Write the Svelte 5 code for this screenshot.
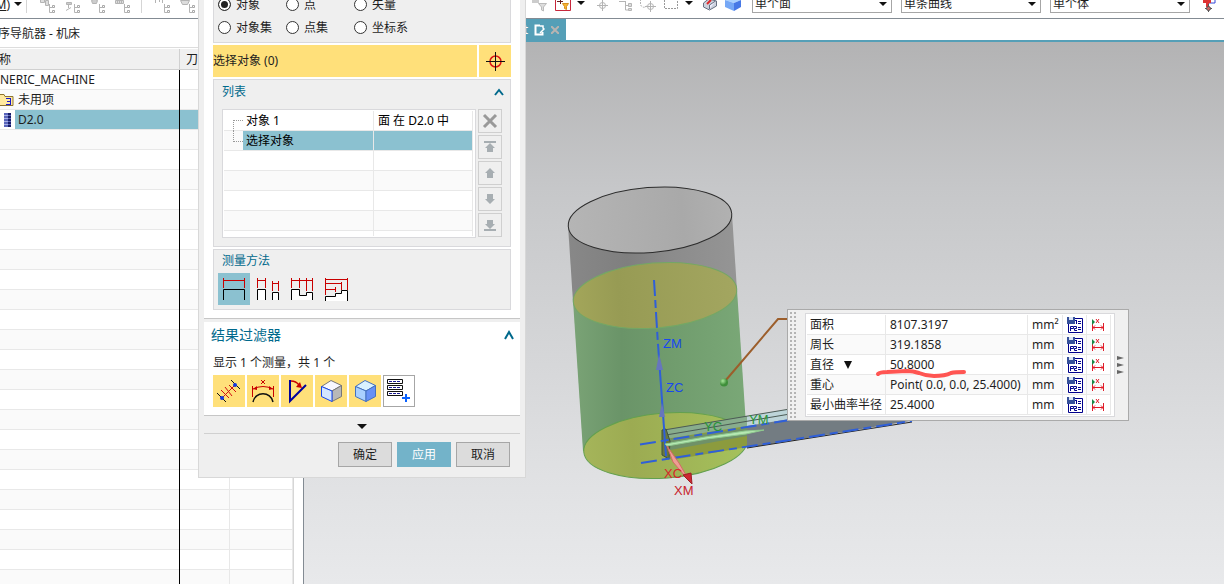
<script>
  let target = $state("object");
  let method = $state("free");
  let facet = $state("diameter");

  const targets = [
    { value: "object", label: "对象" },
    { value: "point", label: "点" },
    { value: "vector", label: "矢量" },
    { value: "objects", label: "对象集" },
    { value: "points", label: "点集" },
    { value: "csys", label: "坐标系" },
  ];

  const grey = 'fill="none" stroke="#b4b4b4"';
  const tree = `<path ${grey} d="M9.5 7v8.5h3M9.5 10.500h3"/><path fill="#fff" stroke="#a8a8a8" d="M12.500 8.500h2v2h-2zM12.500 13.500h2v2h-2z"/>`;

  const viewTools = [
    { label: "程序顺序视图", art: `<path fill="#ddd" stroke="#b4b4b4" d="M.5 1.500h4v4h-4zM5.500 3.500h3v5h-3z"/>${tree}` },
    { label: "机床视图", art: `<path fill="#ccc" stroke="#b4b4b4" d="M1.500 5.500h5v2h-5zM3.500 8v3M1 13.500l5-3"/>${tree}` },
    { label: "几何视图", art: `<path fill="#ccc" stroke="#b4b4b4" d="M1.500 3.500q3-3 6 0l-1 3h-4z"/>${tree}` },
    { label: "加工方法视图", art: `<path fill="#ddd" stroke="#b4b4b4" d="M.5 3.500h8v3h-8zM2.500 4v2M4.500 4v2M6.500 4v2"/>${tree}` },
  ];

  const createTools = [
    { label: "创建刀具", art: `<path ${grey} d="M.5 2v4M4.500 2v3M7.500 2v4"/>${tree}` },
    { label: "创建工序", art: `<path fill="#ddd" stroke="#b4b4b4" d="M.5 3.500h9l-2 4h-5z"/>${tree}` },
  ];

  const snapTools = [
    { label: "选择范围", art: '<path fill="#ccc" d="M0 3h7v3H0z"/><path fill="#ddd" stroke="#bbb" d="M6.500 6.500h8l-3 3.500v4l-2-1v-3z"/>' },
    { label: "类型过滤器", art: '<path fill="#fff" stroke="#c8283c" d="M.5.500h15v13h-15z"/><path stroke="#6b2020" d="M2 4.500h6M5.500 2v5"/><path fill="#f7b733" stroke="#d89020" d="M7.500 6.500h6l-2 3v3l-2-1v-2z"/>' , menu: true },
    { label: "捕捉点", art: `<path ${grey} d="M8.500 1v13M3 8.500h11"/><circle cx="8.500" cy="8.500" r="3" ${grey}/>` },
    { label: "装配范围", art: `<path ${grey} d="M2 4.500h7M8.500 4v9h3M8.500 8.500h3"/><path fill="#ddd" stroke="#b4b4b4" d="M11.500 6.500h3v3h-3zM11.500 11.500h3v2h-3z"/>` },
    { label: "高亮显示", art: `<path ${grey} stroke-dasharray="2 1" d="M.5 2v6q3 4 6 1"/><circle cx="10.500" cy="9.500" r="3" ${grey}/><path ${grey} d="M10.500 4v11M5 9.500h11"/>` },
    { label: "矩形选择", art: '<path fill="none" stroke="#999" stroke-dasharray="2 1" d="M1.500 0v11.500h13V0"/>', menu: true },
    { label: "显示实体", art: '<path fill="#cdd2dd" stroke="#677083" d="M1.500 6l5-4 8 2v5l-7 4-6-3z"/><path fill="#eef" stroke="#677083" d="M7.500 12V8l6-4"/><path fill="none" stroke="#e02828" stroke-width="2" d="M5 7l4-4"/>' },
    { label: "着色", art: '<path fill="#a9d1ff" d="M0 3l8-3 8 3-7 3z"/><path fill="#76a8f6" d="M0 3l9 3v8l-9-4z"/><path fill="#4779e6" d="M9 6l7-3v7l-7 4z"/>' },
  ];

  const rules = [
    { label: "面规则", value: "单个面" },
    { label: "曲线规则", value: "单条曲线" },
    { label: "体规则", value: "单个体" },
  ];

  const listTools = [
    { label: "移除", art: '<path d="M2 2l12 12M14 2L2 14" stroke="#999" stroke-width="3"/>' },
    { label: "移至顶部", art: '<path fill="#a7aeb2" d="M2 2h12v2H2zM8 4l5 5h-2v4H5V9H3z"/>' },
    { label: "上移", art: '<path fill="#a7aeb2" d="M8 3l5 5h-2v5H5V8H3z"/>' },
    { label: "下移", art: '<path fill="#a7aeb2" d="M8 13l5-5h-2V3H5v5H3z"/>' },
    { label: "移至底部", art: '<path fill="#a7aeb2" d="M2 12h12v2H2zM8 12l5-5h-2V3H5v4H3z"/>' },
  ];

  const methods = [
    { id: "free", label: "自由", art: '<path stroke="#c80000" d="M5.500 5v10M26.500 5v10M6 7.500h20"/><path stroke="#000" d="M5.500 27V16.500h21V27"/>' },
    { id: "pair", label: "对象对", art: '<path stroke="#c80000" d="M5.500 5v10M13.500 5v10M6 7.500h8M20.500 8v10M26.500 8v10M21 10.500h6"/><path fill="#fff" stroke="#000" d="M5.500 27V16.500h8V27M20.500 27v-7.500h6V27"/>' },
    { id: "chain", label: "对象链", art: '<path stroke="#c80000" d="M5.500 5v10M13.500 5v10M20.500 5v13M26.500 5v13M6 7.500h21"/><path fill="#fff" stroke="#000" d="M5.500 27V16.500h8v6h7v-3h6V27"/>' },
    { id: "base", label: "从参考对象", art: '<path stroke="#c80000" d="M5.500 5v17M27.500 5v12M6 6.500h21M6 10.500h15M21.500 9v8M6 16.500h9M15.500 14v5"/><path fill="#fff" stroke="#000" d="M5.500 28v-4.500h10v-3h6v-3h6V28"/>' },
  ];

  const cubeLine = 'stroke-linejoin="round"';
  const filters = [
    { label: "距离", art: '<path stroke="#111" d="M4 18l9 9M18 5l9 9"/><path stroke="#d01010" d="M9 23L22 10M8 15l8 8M12 12l7 9M16 10l7 7"/><circle cx="9" cy="23" r="2" fill="#1238e0"/><circle cx="22" cy="10" r="2" fill="#1238e0"/>' },
    { label: "曲线长度", art: '<path stroke="#c80000" d="M5.500 11v11M26.500 11v11M6 14q10-5 20 0M14 5l4 4M18 5l-4 4"/><path fill="#c80000" d="M6 14l4-3v4zM26 14l-4-3v4z"/><path stroke="#111" stroke-width="1.500" d="M6 27c2-11 18-11 20 0"/>' },
    { label: "角度", art: '<path stroke="#00009c" stroke-width="2" d="M9 5v21L25 10"/><path stroke="#c80000" stroke-width="1.500" d="M10 6q5 0 8 4"/><path fill="#c80000" d="M21 13l-6-1 4-5z"/>' },
    { label: "面", art: `<path fill="#f8f8ff" stroke="#777" ${cubeLine} d="M6.500 11.500L16 5.500l10.500 5L17 16z"/><path fill="#b8b8b8" stroke="#777" ${cubeLine} d="M17 16l9.500-5.500v11L17 26.500z"/><path fill="#d3e6ff" stroke="#1445f0" ${cubeLine} d="M6.500 11.500L17 16v10.500L6.500 21.500z"/>` },
    { label: "体", art: `<path fill="#d9f2ff" stroke="#4471c0" ${cubeLine} d="M6.500 11.500L16 5.500l10.500 5L17 16z"/><path fill="#a9d0ff" stroke="#4471c0" ${cubeLine} d="M6.500 11.500L17 16v10.500L6.500 21.500z"/><path fill="#6791f6" stroke="#4471c0" ${cubeLine} d="M17 16l9.500-5.500v11L17 26.500z"/>` },
  ];

  const results = [
    { id: "area", name: "面积", value: "8107.3197", unit: "mm²" },
    { id: "perimeter", name: "周长", value: "319.1858", unit: "mm" },
    { id: "diameter", name: "直径", value: "50.8000", unit: "mm" },
    { id: "centroid", name: "重心", value: "Point( 0.0, 0.0, 25.4000)", unit: "mm" },
    { id: "radius", name: "最小曲率半径", value: "25.4000", unit: "mm" },
  ];

  const emptyRows = Array(23);
</script>

{#snippet caret()}
  <svg class="caret" width="8" height="4" viewBox="0 0 8 4" aria-hidden="true"><path d="M0 0h8L4 4z" fill="#111" /></svg>
{/snippet}

{#snippet tool(item)}
  <button class="tool" aria-label={item.label}>
    <svg width="16" height="16" viewBox="0 0 16 16" aria-hidden="true">{@html item.art}</svg>
  </button>
  {#if item.menu}
    <button class="tool-menu" aria-label="{item.label}选项">{@render caret()}</button>
  {/if}
{/snippet}

<div class="app">
  <header class="toolbar">
    <div class="tools-left">
      <button class="menu"><span><u>M</u>)</span></button>
      {@render caret()}
      <div class="tool-group">
        {#each viewTools as item}{@render tool(item)}{/each}
      </div>
      <div class="tool-group">
        {#each createTools as item}{@render tool(item)}{/each}
      </div>
    </div>
    <div class="tools-right">
      {#each snapTools as item}{@render tool(item)}{/each}
    </div>
    <div class="rules">
      {#each rules as rule}
        <div class="combo">
          <select aria-label={rule.label}><option>{rule.value}</option></select>
          {@render caret()}
        </div>
      {/each}
    </div>
    <button class="tool" aria-label="相交处停止">
      <svg width="16" height="16" viewBox="0 0 16 16" aria-hidden="true">
        <path d="M7 0v6h6V0" fill="#fff" stroke="#3447d8" />
        <path d="M1 3h8v3H7v4H4V6H1z" fill="#d33" />
        <path d="M6.500 7v8M3 11.500h7" stroke="#555" />
        <circle cx="6.500" cy="11.500" r="2" fill="#c66" stroke="#555" />
      </svg>
    </button>
  </header>

  <div class="workspace">
    <aside class="navigator">
      <h2><span>序导航器 - 机床</span></h2>
      <table class="nav-table">
        <thead>
          <tr><th><div class="scrolled head-name">称</div></th><th>刀</th><th></th></tr>
        </thead>
        <tbody>
          <tr><td><div class="scrolled root-name">NERIC_MACHINE</div></td><td></td><td></td></tr>
          <tr>
            <td>
              <div class="node">
                <svg width="14" height="14" viewBox="0 0 14 14" aria-hidden="true">
                  <path d="M-1 1.500h5l1 2h8v9H-1z" fill="#ffe9a0" stroke="#8d7430" />
                  <path d="M6 5.500h5M7 8.500h4M6 11.500h5M10.500 5v7" stroke="#1717d0" />
                </svg>
                <span>未用项</span>
              </div>
            </td>
            <td></td><td></td>
          </tr>
          <tr class="picked">
            <td>
              <div class="node">
                <svg width="14" height="14" viewBox="0 0 14 14" aria-hidden="true">
                  <path d="M4 0h7v14H4z" fill="#5864ba" />
                  <path d="M4 2.500h4M4 5.500h4M4 8.500h4M4 11.500h4" stroke="#a9b0e4" />
                  <path d="M9.500 0v14" stroke="#181d66" stroke-width="3" stroke-dasharray="2 1" />
                </svg>
                <span>D2.0</span>
              </div>
            </td>
            <td></td><td></td>
          </tr>
          {#each emptyRows as _}
            <tr><td></td><td></td><td></td></tr>
          {/each}
        </tbody>
      </table>
    </aside>

    <main class="view">
      <div class="tabs">
        <div class="tab">
          <span>机床.prt</span>
          <svg width="11" height="12" viewBox="0 0 11 12" aria-hidden="true">
            <path d="M6 1.500H1.500v9h7V8" fill="none" stroke="#fff" stroke-width="2" />
            <path d="M6 2h3v2l1 1-4 4" fill="none" stroke="#fff" stroke-width="1.500" />
          </svg>
          <button aria-label="关闭">
            <svg width="8" height="8" viewBox="0 0 8 8" aria-hidden="true"><path d="M0 0l8 8M8 0L0 8" stroke="#b9b4b1" stroke-width="2" /></svg>
          </button>
        </div>
      </div>

      <svg class="scene" viewBox="304 42 920 542" preserveAspectRatio="xMinYMin meet" role="img" aria-label="D2.0">
        <defs>
          <linearGradient id="shell"><stop offset="0" stop-color="#888" /><stop offset=".35" stop-color="#7f7f7f" /><stop offset=".6" stop-color="#8b8b8b" /><stop offset="1" stop-color="#959595" /></linearGradient>
          <linearGradient id="lid"><stop offset="0" stop-color="#b5b5b5" /><stop offset=".7" stop-color="#a9a9a9" /><stop offset="1" stop-color="#b1b1b1" /></linearGradient>
          <linearGradient id="green"><stop offset="0" stop-color="#7aa376" /><stop offset=".28" stop-color="#6a9468" /><stop offset=".6" stop-color="#719d6e" /><stop offset="1" stop-color="#7aa877" /></linearGradient>
          <linearGradient id="olive"><stop offset="0" stop-color="#a3a65a" /><stop offset=".28" stop-color="#979b54" /><stop offset="1" stop-color="#a3a660" /></linearGradient>
          <linearGradient id="base"><stop offset="0" stop-color="#a5b55a" /><stop offset=".3" stop-color="#9cab52" /><stop offset="1" stop-color="#a5c25c" /></linearGradient>
          <radialGradient id="ball" cx=".35" cy=".3"><stop offset="0" stop-color="#a8e89a" /><stop offset="1" stop-color="#3f8f3a" /></radialGradient>
        </defs>

        <path d="M568 225L573 302L737 290L732 214z" fill="url(#shell)" />
        <path d="M573 301L583 451L747 440L737 290z" fill="url(#green)" />
        <ellipse cx="650" cy="220" rx="82" ry="32.500" transform="rotate(-4.600 650 220)" fill="url(#lid)" stroke="#2c2c2c" />
        <ellipse cx="655" cy="295.500" rx="82" ry="32.500" transform="rotate(-4.600 655 295.500)" fill="url(#olive)" stroke="#74a765" />
        <ellipse cx="665.500" cy="445.500" rx="82" ry="32.500" transform="rotate(-4.600 665.500 445.500)" fill="url(#base)" stroke="#63a04f" />

        <!-- tool shank running out of the cylinder -->
        <path d="M747 425L800 416L940 416L747 448z" fill="#737c82" />
        <path d="M747 448L912 422" stroke="#222" />
        <path d="M665 438L747 425V447L672 460L664 455z" fill="#8c9b3e" />
        <path d="M668 439L747 428V436L670 450z" fill="#6f9168" />
        <path d="M664 430L747 416V426L665 439z" fill="#88ad8d" />
        <path d="M747 416L790 409V419L747 426z" fill="#bdd5d9" />
        <path d="M664 430L790 409M666 435L790 414" stroke="#4b5a54" fill="none" />
        <path d="M662 430l4-1 4 12-1 18-7-4z" fill="#68783d" stroke="#3f5240" />

        <g fill="none" stroke="#2f5fd8" stroke-width="2">
          <path d="M640 444.500L790 420" stroke-dasharray="16 5 8 5" />
          <path d="M641 463L912 421" stroke-dasharray="16 5 8 5" />
          <path d="M654 280L658 345" stroke-dasharray="16 4 8 4" />
          <path d="M658 344L666 456" />
        </g>
        <path d="M659 354l4 16h-7zM662 403l3 14h-6z" fill="#6776bd" />
        <path d="M665 444L705 437L745 431L764 430L746 434L707 439L667 446z" fill="#b7e8b3" stroke="#8fca8f" />
        <path d="M667 446L679 463L690 482L673 462z" fill="#ee9d94" stroke="#d36b65" />
        <path d="M683 475l8-2 1 11z" fill="#ce2732" stroke="#9d1e25" />

        <g class="axis">
          <text x="663" y="348" fill="#1748f0">ZM</text>
          <text x="666" y="392" fill="#1748f0">ZC</text>
          <text x="704" y="431" fill="#2b9439">YC</text>
          <text x="749" y="424" fill="#2b9439">YM</text>
          <text x="664" y="478" fill="#d8252b">XC</text>
          <text x="674" y="495" fill="#c8232d">XM</text>
        </g>

        <path d="M726 380L778 319H790" fill="none" stroke="#9c5e2b" stroke-width="2" />
        <circle cx="724" cy="382.500" r="4" fill="url(#ball)" />
      </svg>
    </main>
  </div>

  <section class="dialog" role="dialog" aria-label="测量">
    <div class="block">
      <div class="group radios">
        {#each targets as item}
          <label><input type="radio" name="target" value={item.value} bind:group={target} />{item.label}</label>
        {/each}
      </div>

      <div class="pick">
        <span>选择对象 (0)</span>
        <button aria-label="选择对象">
          <svg width="20" height="20" viewBox="0 0 20 20" aria-hidden="true">
            <circle cx="10.500" cy="10.500" r="5.500" fill="none" stroke="#dc1414" stroke-width="1.500" />
            <path d="M1 10.500h19M10.500 1v19" stroke="#111" />
          </svg>
        </button>
      </div>

      <div class="group">
        <button class="fold">
          列表
          <svg width="10" height="8" viewBox="0 0 10 8" aria-hidden="true"><path d="M1 7l4-5 4 5" /></svg>
        </button>
        <div class="list">
          <div class="list-frame">
            <table>
              <tbody>
                <tr><td><div class="leaf">对象 1</div></td><td>面 在 D2.0 中</td></tr>
                <tr class="picked"><td><div class="leaf last">选择对象</div></td><td></td></tr>
                {#each Array(4) as _}
                  <tr><td></td><td></td></tr>
                {/each}
                <tr class="stub"><td></td><td></td></tr>
              </tbody>
            </table>
          </div>
          <div class="list-tools">
            {#each listTools as item}
              <button aria-label={item.label}>
                <svg width="16" height="16" viewBox="0 0 16 16" aria-hidden="true">{@html item.art}</svg>
              </button>
            {/each}
          </div>
        </div>
      </div>

      <div class="group">
        <h3>测量方法</h3>
        <div class="methods">
          {#each methods as item}
            <button class:active={method === item.id} aria-label={item.label} onclick={() => (method = item.id)}>
              <svg width="32" height="32" viewBox="0 0 32 32" fill="none" aria-hidden="true">{@html item.art}</svg>
            </button>
          {/each}
        </div>
      </div>
    </div>

    <div class="block results-filter">
      <button class="fold big">
        结果过滤器
        <svg width="12" height="10" viewBox="0 0 12 10" aria-hidden="true"><path d="M2 9l4-7 4 7" /></svg>
      </button>
      <p>显示 1 个测量，共 1 个</p>
      <div class="filters">
        {#each filters as item}
          <button aria-label={item.label}>
            <svg width="32" height="32" viewBox="0 0 32 32" fill="none" aria-hidden="true">{@html item.art}</svg>
          </button>
        {/each}
        <button class="plain" aria-label="添加到列表">
          <svg width="30" height="30" viewBox="0 0 30 30" fill="none" aria-hidden="true">
            <path d="M3.500 3.500h15v4h-15zM3.500 9.500h15v4h-15zM3.500 15.500h15v4h-15z" stroke="#111" />
            <path d="M5 5.500h12M5 11.500h12M5 17.500h12" stroke="#1a1a90" stroke-dasharray="3 1" />
            <path d="M18 22h8M22 18v8" stroke="#0a62ff" stroke-width="2" />
          </svg>
        </button>
      </div>
    </div>

    <button class="more" aria-label="更多">
      <svg width="10" height="5" viewBox="0 0 10 5" aria-hidden="true"><path d="M0 0h10L5 5z" fill="#111" /></svg>
    </button>
    <footer>
      <button>确定</button>
      <button class="primary">应用</button>
      <button>取消</button>
    </footer>
  </section>

  <section class="readout" aria-label="测量结果">
    <div class="grip"></div>
    <div class="readout-frame">
      <table>
        <tbody>
          {#each results as row}
            <tr>
              <td>
                {#if row.id === facet}
                  <div class="facet">
                    <select aria-label="结果类型"><option>{row.name}</option></select>
                    <svg width="8" height="8" viewBox="0 0 8 8" aria-hidden="true"><path d="M0 0h8L4 8z" fill="#111" /></svg>
                  </div>
                {:else}
                  {row.name}
                {/if}
              </td>
              <td>
                {row.value}
                {#if row.id === facet}
                  <svg class="mark" width="92" height="12" viewBox="0 0 92 12" aria-hidden="true">
                    <path d="M3 6Q5 4 12 4L32 3Q38 3 44 5Q51 8 59 8Q70 8 76 5Q80 4 89 4" />
                  </svg>
                {/if}
              </td>
              <td>{row.unit}</td>
              <td>
                <button aria-label="保存{row.name}">
                  <svg width="16" height="16" viewBox="0 0 16 16" aria-hidden="true">
                    <path d="M1.500 1.500h14v14h-14z" fill="#fff" stroke="#00008c" />
                    <path d="M0 0h8v7H0z" fill="#35509a" />
                    <path d="M2 0h4v3H2z" fill="#dbe6f5" />
                    <path d="M9.500 3v4M8 3.500h2M11 4.500h3M11 6.500h3M3.500 14V9.500h3v2h-3M7 9.500h2.500v2H7.500v2H10M11 10.500h3M11 12.500h3" fill="none" stroke="#00008c" />
                  </svg>
                </button>
              </td>
              <td>
                <button aria-label="标注{row.name}">
                  <svg width="14" height="14" viewBox="0 0 14 14" fill="none" aria-hidden="true">
                    <path d="M1.500 5v8M12.500 5v8M2 9.500h10M4 7.500l-2 2 2 2M10 7.500l2 2-2 2" stroke="#e01c28" />
                    <path d="M5 1l3 4M8 1L5 5" stroke="#e01c28" />
                    <path d="M1 1l3 3-3 3z" fill="#168a45" />
                  </svg>
                </button>
              </td>
            </tr>
          {/each}
        </tbody>
      </table>
    </div>
    <svg class="expand" width="8" height="20" viewBox="0 0 8 20" aria-hidden="true">
      <path d="M0 1l7 2-7 2zM0 8l7 2-7 2zM0 15l7 2-7 2z" fill="#666" />
    </svg>
  </section>
</div>

<style>
:global(body) {
  background: #fff;
}

.app {
  position: relative;
  display: flex;
  flex-direction: column;
  height: 100vh;
  overflow: hidden;
  font: 12px/16px "Noto Sans", "Noto Sans CJK SC", sans-serif;
  color: #1e1e1e;
}

.app *,
.app :global(*) {
  box-sizing: border-box;
}

svg {
  display: block;
  flex: none;
}

button,
select {
  margin: 0;
  padding: 0;
  font: inherit;
  color: inherit;
  background: none;
  border: 0;
  border-radius: 0;
  appearance: none;
}

table {
  width: 100%;
  table-layout: fixed;
  border-collapse: separate;
  border-spacing: 0;
}

th,
td {
  padding: 0;
  font-weight: 400;
  text-align: left;
}

h2,
h3,
p {
  margin: 0;
  font-size: 12px;
  font-weight: 400;
}

/* toolbar */
.toolbar {
  display: flex;
  flex: none;
  align-items: flex-end;
  height: 19px;
  padding-bottom: 5px;
  border-bottom: 1px solid #838b93;
}

.tools-left {
  display: flex;
  flex: 0 0 532px;
  align-items: flex-end;
}

.menu {
  display: flex;
  justify-content: flex-end;
  width: 10px;
  margin-right: 4px;
}

.menu span {
  white-space: nowrap;
}

.tools-left > .caret {
  margin-bottom: 7px;
  margin-right: 4px;
}

.tool-group {
  display: flex;
  gap: 9px;
  height: 20px;
  padding: 4px 10px 0 13px;
  border-left: 1px solid #d5d5d5;
}

.tools-right {
  display: flex;
  flex: 0 0 220px;
  gap: 7px;
}

.tool-menu {
  display: flex;
  justify-content: center;
  align-items: center;
  width: 12px;
  height: 12px;
  margin-left: -3px;
}

.rules {
  display: flex;
  gap: 9px;
  margin-right: 12px;
}

.combo {
  display: grid;
  align-items: center;
  width: 140px;
  height: 22px;
}

.combo > :global(*) {
  grid-area: 1 / 1;
}

.combo select {
  height: 22px;
  padding: 4px 2px 0;
  background: #fff;
  border: 1px solid #a6a6a6;
}

.combo :global(.caret) {
  justify-self: end;
  margin-right: 5px;
  margin-top: 4px;
  pointer-events: none;
}

/* navigator */
.workspace {
  display: flex;
  flex: 1;
  min-height: 0;
}

.navigator {
  flex: 0 0 304px;
  padding-right: 9px;
  overflow: hidden;
  border-right: 1px solid #838b93;
}

.navigator h2 {
  display: flex;
  height: 29px;
  align-items: center;
  padding-top: 2px;
  border-bottom: 1px solid #ddd;
}

.navigator h2 span {
  display: flex;
  justify-content: flex-end;
  width: 80px;
  white-space: nowrap;
}

.nav-table {
  margin-top: 1px;
  border-right: 1px solid #d6d6d6;
}

.nav-table th {
  height: 21px;
  padding-top: 1px;
  padding-left: 6px;
  background: #f0f0f0;
  border-right: 1px solid #d0d0d0;
  border-bottom: 1px solid #d0d0d0;
}

.nav-table th:nth-child(1) {
  width: 180px;
  padding-left: 0;
}

.nav-table th:nth-child(2) {
  width: 50px;
}

.nav-table td {
  height: 20px;
  border-right: 1px solid #e8e8e8;
  border-bottom: 1px solid #e8e8e8;
}

/* unbroken black rule after the name column */
.nav-table td:first-child {
  padding: 0 1px 1px 0;
  border: 0;
  box-shadow: inset -1px 0 #000, inset 0 -1px #e8e8e8;
}

.nav-table tr:nth-child(even) td {
  background: #fafafa;
}

.scrolled {
  display: flex;
  justify-content: flex-end;
  white-space: nowrap;
}

.head-name {
  width: 11px;
}

.root-name {
  justify-content: flex-start;
}

.node {
  display: flex;
  align-items: center;
  height: 19px;
}

.node span {
  flex: 1;
  margin-left: 1px;
  padding-left: 3px;
  line-height: 19px;
}

.picked .node span,
.nav-table .picked td:not(:first-child) {
  background: #8bc1d0;
}

/* graphics view */
.view {
  display: flex;
  flex: 1;
  flex-direction: column;
  min-width: 0;
}

.tabs {
  display: flex;
  flex: none;
  height: 23px;
  border-bottom: 2px solid #559fb7;
}

.tab {
  display: flex;
  align-items: center;
  justify-content: flex-end;
  gap: 6px;
  width: 262px;
  padding-right: 7px;
  color: #fff;
  background: #559fb7;
}

.scene {
  flex: 1;
  width: 100%;
  min-height: 0;
  background: linear-gradient(#b3b3b4, #c6c7c9 27%, #e0e1e3 80%, #e8e9eb);
}

.axis {
  font: 13px "Liberation Sans", sans-serif;
}

/* measure dialog */
.dialog {
  position: absolute;
  top: -8px;
  left: 198px;
  width: 328px;
  padding: 0 5px;
  background: #efefef;
  border: 1px solid #d8d8d8;
  border-top: 0;
}

.block {
  display: flex;
  flex-direction: column;
  gap: 2px;
  padding: 0 9px 8px;
  background: #fff;
  border-bottom: 1px solid #c6c6c6;
}

.group {
  background: #efefef;
  border: 1px solid #d9d9dc;
}

.radios {
  display: grid;
  grid-template-columns: 68px 68px auto;
  grid-auto-rows: 23px;
  padding: 0 4px 3px;
}

.radios label {
  display: flex;
  align-items: center;
  gap: 5px;
}

.radios input {
  width: 13px;
  height: 13px;
  margin: 0;
  appearance: none;
  background: #fff;
  border: 1px solid #333;
  border-radius: 50%;
}

.radios input:checked {
  background: #222;
  box-shadow: inset 0 0 0 2px #fff;
}

.pick {
  display: grid;
  grid-template-columns: 1fr 32px;
  gap: 2px;
  height: 32px;
}

.pick > * {
  display: flex;
  align-items: center;
  background: #ffe07a;
}

.pick button {
  justify-content: center;
}

.fold {
  display: flex;
  align-items: center;
  justify-content: space-between;
  width: 100%;
  height: 23px;
  padding: 0 6px 0 8px;
  color: #00698c;
}

.fold path {
  fill: none;
  stroke: #00698c;
  stroke-width: 2;
}

.list {
  display: grid;
  grid-template-columns: 1fr 24px;
  gap: 2px;
  padding: 6px 8px 8px;
}

.list-frame {
  padding: 1px 2px 1px 1px;
  color: #000;
  background: #fff;
  border: 1px solid #d9d9dc;
}

.list-frame td {
  height: 20px;
  padding-left: 4px;
  border-right: 1px solid #e8e8e8;
  border-bottom: 1px solid #e8e8e8;
}

.list-frame td:first-child {
  width: 150px;
  padding-left: 9px;
}

.list-frame tr:nth-child(even) td {
  background: #fafafa;
}

.list-frame .picked td:last-child {
  background: #8bc1d0;
}

.list-frame .stub td {
  height: 5px;
  border-bottom: 0;
}

.leaf {
  display: flex;
  height: 19px;
  line-height: 19px;
}

.leaf::before {
  width: 9px;
  height: 10px;
  margin: 9px 3px 0 0;
  content: "";
  border-top: 1px dotted #999;
  border-left: 1px dotted #999;
}

.leaf.last {
  background: linear-gradient(90deg, transparent 10px, #8bc1d0 10px);
}

.leaf.last::before {
  margin-top: 0;
  border-top: 0;
  border-bottom: 1px dotted #999;
}

.list-tools {
  display: flex;
  flex-direction: column;
  gap: 2px;
}

.list-tools button {
  display: grid;
  place-items: center;
  height: 24px;
  border: 1px solid #cfcfcf;
}

h3 {
  height: 21px;
  padding-left: 8px;
  line-height: 21px;
  color: #00698c;
}

.methods,
.filters {
  display: flex;
  gap: 2px;
}

.methods {
  padding: 2px 4px 4px;
}

.methods .active {
  background: #8bc1d0;
}

.results-filter {
  gap: 3px;
  margin-top: 3px;
}

.fold.big {
  width: auto;
  height: 26px;
  margin: 0 -4px 0 -2px;
  padding: 0;
  font-size: 14px;
}

.results-filter p {
  height: 21px;
  line-height: 23px;
}

.filters button {
  width: 32px;
  height: 32px;
  background: #ffe07a;
}

.filters .plain {
  background: #fff;
  border: 1px solid #a6a6a6;
}

.more {
  display: flex;
  align-items: center;
  justify-content: center;
  width: 100%;
  height: 18px;
  padding-top: 3px;
  border-bottom: 1px solid #d0d0d0;
}

footer {
  display: flex;
  justify-content: flex-end;
  gap: 5px;
  padding: 8px 10px 10px;
}

footer button {
  width: 54px;
  height: 25px;
  background: #dcdcdc;
  border: 1px solid #a6a6a6;
}

footer .primary {
  color: #fff;
  background: #73b3c9;
  border-color: #73b3c9;
}

/* floating result table */
.readout {
  position: absolute;
  top: 309px;
  left: 787px;
  display: flex;
  align-items: center;
  width: 342px;
  height: 112px;
  padding: 0 3px 0 2px;
  background: #f0f0f0;
  border: 1px solid #aaa;
}

.grip {
  flex: none;
  width: 7px;
  height: 106px;
  margin-right: 8px;
  background: conic-gradient(at 2px 2px, transparent 75%, #b4b4b4 0) 0 0 / 4px 4px;
}

.readout-frame {
  flex: 1;
  min-width: 0;
  height: 104px;
  padding: 1px 3px 1px 1px;
  background: #fff;
  border: 1px solid #d9d9dc;
}

.readout td {
  position: relative;
  height: 20px;
  padding-left: 4px;
  line-height: 18px;
  white-space: nowrap;
  border-right: 1px solid #e8e8e8;
  border-bottom: 1px solid #e8e8e8;
}

.readout td button {
  display: block;
}

.readout tr:nth-child(even) td {
  background: #fafafa;
}

.readout td:nth-child(1) {
  width: 79px;
  padding-left: 3px;
}

.readout td:nth-child(2) {
  width: 142px;
}

.readout td:nth-child(3) {
  width: 35px;
}

.readout td:nth-child(4),
.readout td:nth-child(5) {
  width: 24px;
}

.facet {
  display: flex;
  align-items: center;
  gap: 10px;
}

.facet select {
  width: 24px;
}

.mark {
  position: absolute;
  top: 13px;
  left: -11px;
  z-index: 1;
}

.mark path {
  fill: none;
  stroke: #ff5552;
  stroke-width: 4;
  stroke-linecap: round;
}

.expand {
  margin-left: 2px;
}
</style>
